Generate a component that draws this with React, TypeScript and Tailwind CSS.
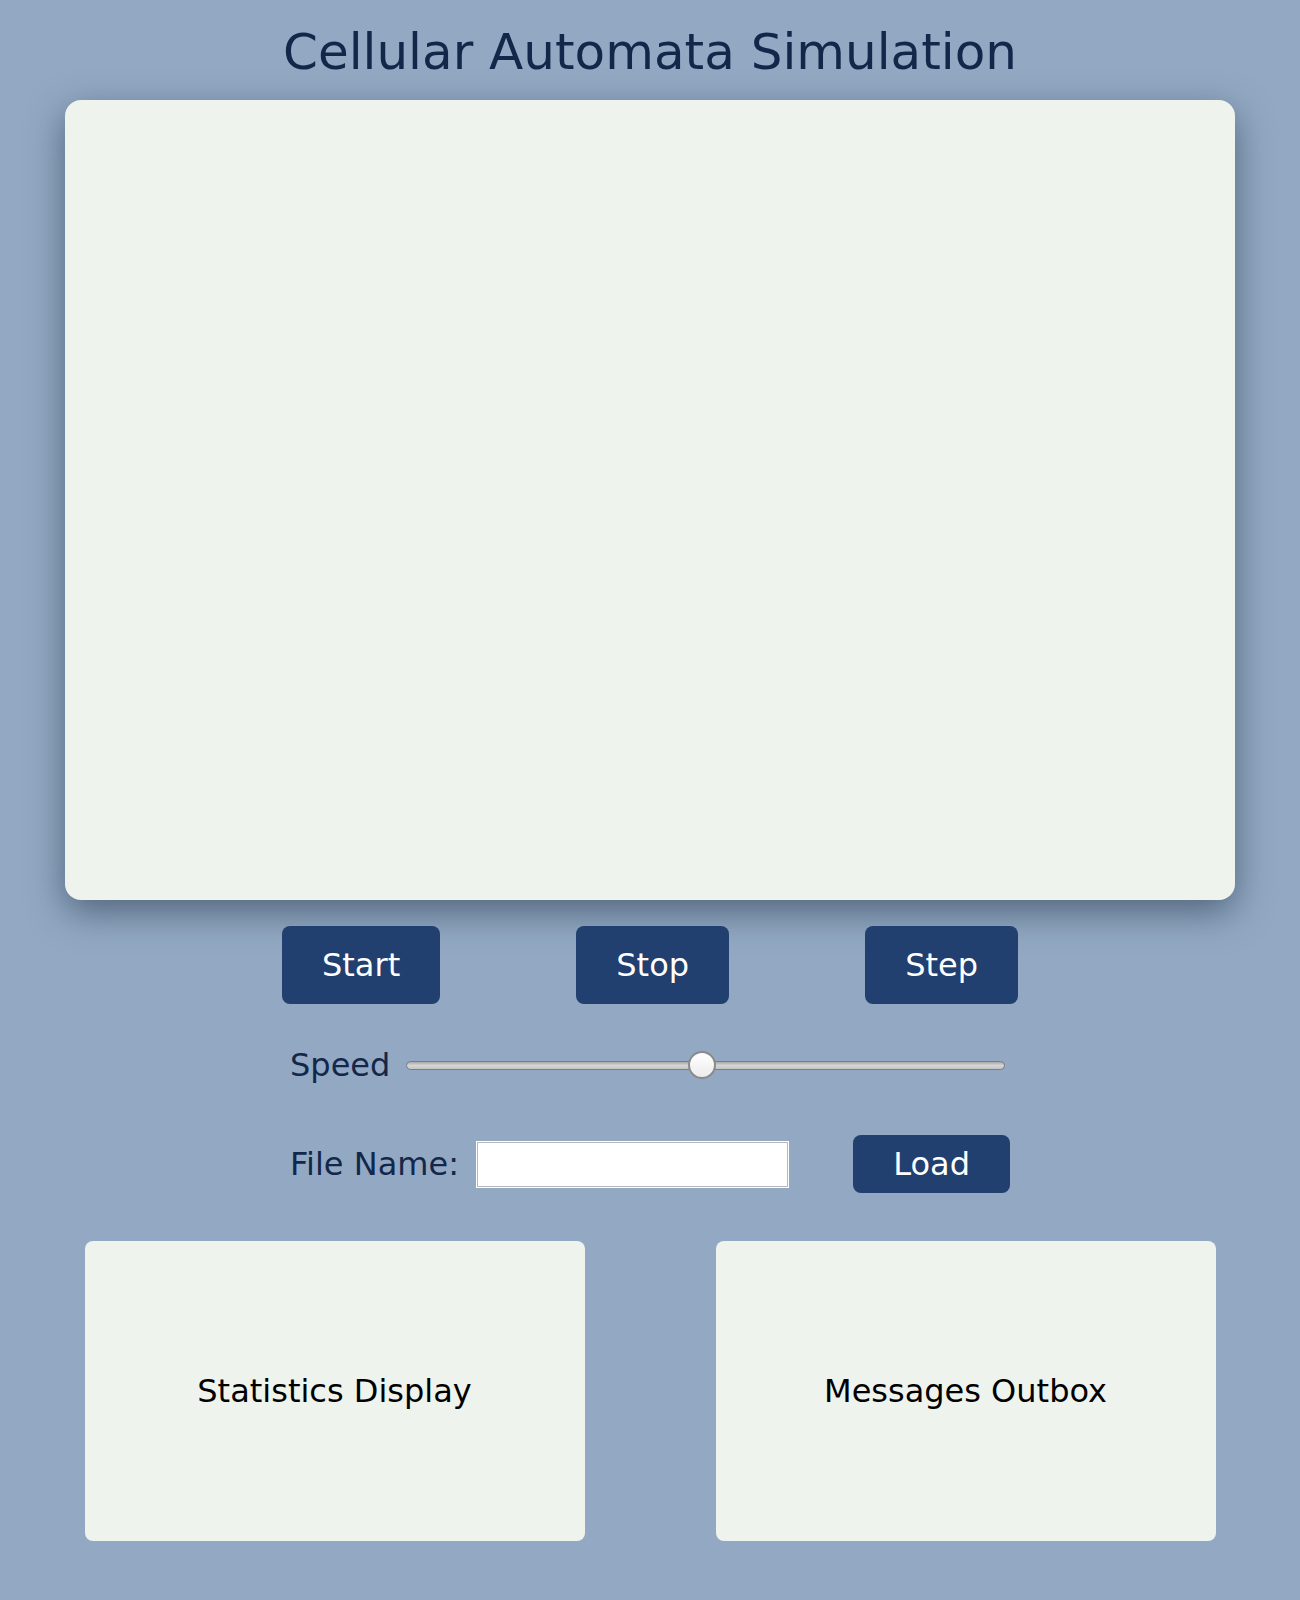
import React from 'react';

export default function App() {
  const buttons = ["Start", "Stop", "Step"];

  return (
    <div className="min-h-screen w-full bg-[#93a9c3] flex flex-col items-center font-['DejaVu_Sans',Verdana,sans-serif]">
      <h1 className="mt-[23px] text-[50px] leading-[58px] text-[#13274a]">Cellular Automata Simulation</h1>

      {/* simulation canvas */}
      <div className="mt-[19px] w-[1170px] h-[800px] rounded-2xl bg-[#eef3ee] shadow-[0_12px_36px_rgba(25,45,65,0.55)]" />

      <div className="mt-[26px] w-[736px] flex justify-between">
        {buttons.map((label) => (
          <button
            key={label}
            className="bg-[#213f6f] text-white text-[32px] leading-[38px] px-10 py-5 rounded-lg"
          >
            {label}
          </button>
        ))}
      </div>

      <div className="mt-[42px] w-[720px] flex items-center">
        <span className="text-[32px] leading-[38px] text-[#13274a]">Speed</span>
        <div className="relative ml-[16px] mr-[5px] flex-1 h-[28px] flex items-center">
          <div className="w-full h-[9px] rounded-full border border-[#7d7d7d] bg-gradient-to-b from-[#a9a9a9] via-[#d6d6d6] to-[#c4c4c4]" />
          <div className="absolute left-[282px] top-0 w-[28px] h-[28px] rounded-full border-2 border-[#8a8a8a] bg-gradient-to-b from-white to-[#ececec]" />
        </div>
      </div>

      <div className="mt-[51px] w-[720px] flex items-center justify-between">
        <div className="flex items-center">
          <span className="text-[32px] leading-[38px] text-[#13274a]">File Name:</span>
          <input
            type="text"
            className="ml-[18px] w-[311px] h-[45px] bg-white border border-[#b8b8b8] ring-1 ring-white outline-none"
          />
        </div>
        <button className="bg-[#213f6f] text-white text-[32px] leading-[36px] px-10 py-[11px] rounded-lg">
          Load
        </button>
      </div>

      <div className="mt-12 mb-[60px] w-[1131px] flex justify-between">
        {["Statistics Display", "Messages Outbox"].map((t) => (
          <div
            key={t}
            className="w-[500px] h-[300px] rounded-lg bg-[#eef3ee] flex items-center justify-center text-[32px] text-black"
          >
            {t}
          </div>
        ))}
      </div>
    </div>
  );
}
